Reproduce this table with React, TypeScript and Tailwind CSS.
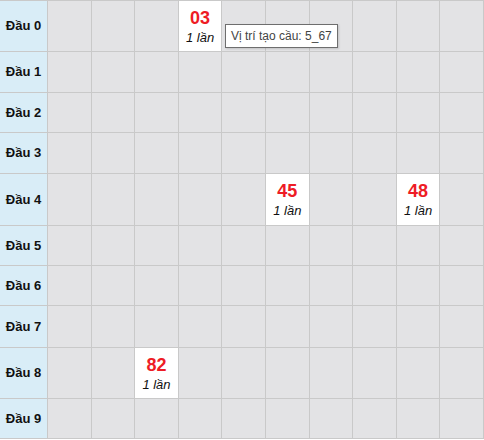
import React from "react";

const hits: Record<string, string> = {
  "0-3": "03",
  "4-5": "45",
  "4-8": "48",
  "8-2": "82",
};

export default function App() {
  const rows = Array.from({ length: 10 }, (_, i) => i);
  const cols = Array.from({ length: 10 }, (_, i) => i);
  return (
    <div className="w-[484px] h-[440px] bg-white" style={{ fontFamily: '"Liberation Sans", Arial, sans-serif' }}>
      <div className="relative">
        <div className="grid grid-cols-[47px_repeat(10,minmax(0,1fr))] grid-rows-[50px_40px_39px_40px_51px_39px_39px_41px_50px_39px] gap-px bg-[#c9c9c9] border-t border-r border-b border-[#c9c9c9]">
          {rows.map((r) => (
            <React.Fragment key={r}>
              <div className="bg-[#d9edf7] flex items-center justify-center text-[13px] font-bold text-[#111]">
                Đầu {r}
              </div>
              {cols.map((c) => {
                const v = hits[`${r}-${c}`];
                return v ? (
                  <div key={c} className="bg-white flex flex-col items-center justify-center">
                    <div className="text-[18px] font-bold text-[#ee1c25] leading-[22px]">{v}</div>
                    <div className="text-[13px] italic text-[#111] leading-[17px]">1 lần</div>
                  </div>
                ) : (
                  <div key={c} className="bg-[#e3e3e5]" />
                );
              })}
            </React.Fragment>
          ))}
        </div>
        <div className="absolute left-[225px] top-[24px] h-[24px] px-[5px] flex items-center bg-white border border-[#6e6e6e] text-[12px] text-[#444] whitespace-nowrap shadow-[1px_1px_2px_rgba(0,0,0,0.15)]">
          Vị trí tạo cầu: 5_67
        </div>
      </div>
    </div>
  );
}
